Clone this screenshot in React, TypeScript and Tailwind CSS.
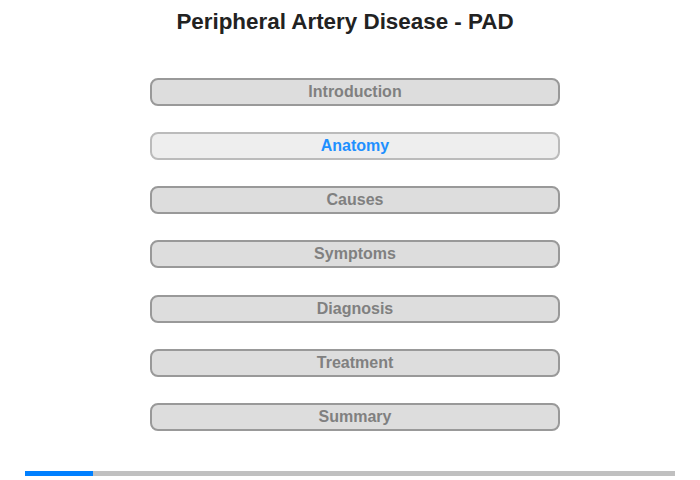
const sections = ['Introduction', 'Anatomy', 'Causes', 'Symptoms', 'Diagnosis', 'Treatment', 'Summary'];
const active = 'Anatomy';

export default function App() {
  return (
    <div className="w-[700px] h-[480px] bg-white flex flex-col items-center font-['Liberation_Sans',Arial,sans-serif]">
      <h1 className="mt-[9px] mr-[10px] h-[26px] leading-[26px] text-[22.4px] font-bold text-[#222]">
        Peripheral Artery Disease - PAD
      </h1>
      <div className="mt-[43px] ml-[10px] flex flex-col gap-[26.17px]">
        {sections.map((s) => {
          const on = s === active;
          return (
            <button
              key={s}
              className={
                on
                  ? 'w-[410px] h-[28px] rounded-[8px] border-2 border-[#bbbbbb] bg-[#eeeeee] text-[#1e90ff] text-[16px] font-bold leading-none'
                  : 'w-[410px] h-[28px] rounded-[8px] border-2 border-[#999999] bg-[#dddddd] text-[#808080] text-[16px] font-bold leading-none'
              }
            >
              {s}
            </button>
          );
        })}
      </div>
      <div className="mt-[40px] w-[650px] h-[5px] bg-[#c0c0c0] flex">
        <div className="w-[68px] h-full bg-[#0080ff]" />
      </div>
    </div>
  );
}
